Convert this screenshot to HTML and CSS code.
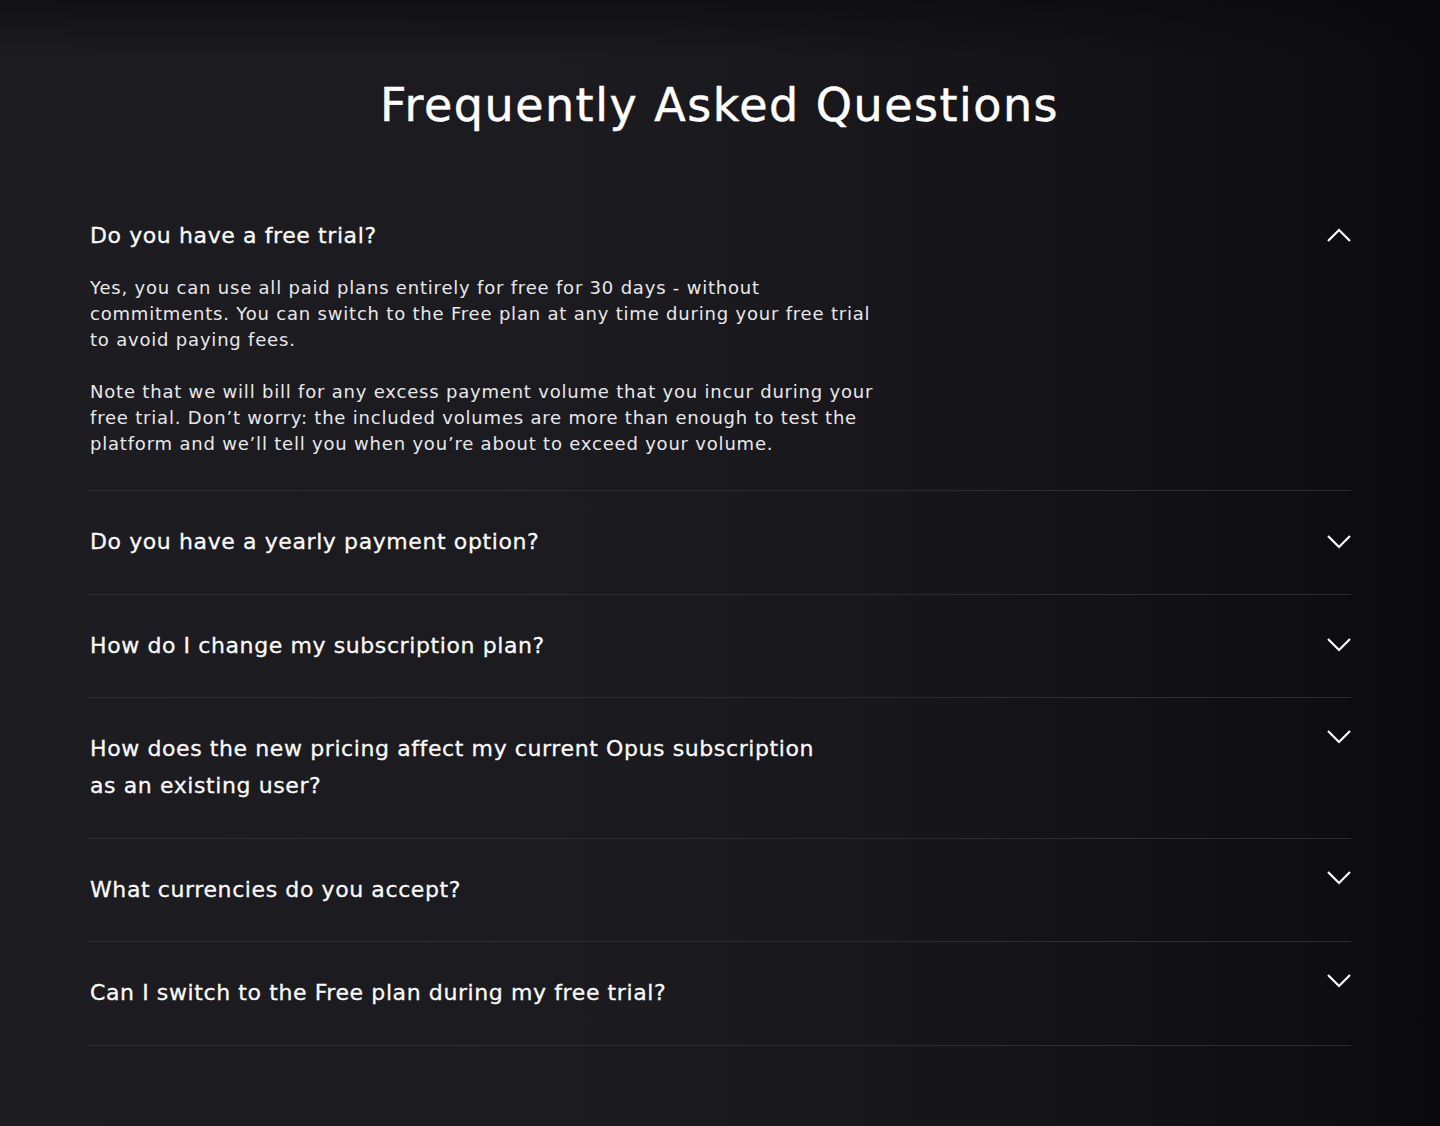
FILE: index.html
```html
<!DOCTYPE html>
<html lang="en">
<head>
<meta charset="utf-8">
<title>FAQ</title>
<link rel="stylesheet" href="styles.css">
</head>
<body>
<main class="page">
  <section class="faq">
    <h1 class="faq-title">Frequently Asked Questions</h1>
    <div class="faq-list">
      <div class="faq-item open">
        <div class="faq-head">
          <h2 class="faq-q">Do you have a free trial?</h2>
          <svg class="chev" width="24" height="14" viewBox="0 0 24 14"><path d="M1 13 L12 2 L23 13" fill="none" stroke="#fff" stroke-width="2.2"/></svg>
        </div>
        <div class="faq-a">
          <p>Yes, you can use all paid plans entirely for free for 30 days - without commitments. You can switch to the Free plan at any time during your free trial to avoid paying fees.</p>
          <p>Note that we will bill for any excess payment volume that you incur during your free trial. Don’t worry: the included volumes are more than enough to test the platform and we’ll tell you when you’re about to exceed your volume.</p>
        </div>
      </div>
      <div class="faq-item">
        <div class="faq-head center">
          <h2 class="faq-q">Do you have a yearly payment option?</h2>
          <svg class="chev" width="24" height="14" viewBox="0 0 24 14"><path d="M1 1 L12 12 L23 1" fill="none" stroke="#fff" stroke-width="2.2"/></svg>
        </div>
      </div>
      <div class="faq-item">
        <div class="faq-head center">
          <h2 class="faq-q">How do I change my subscription plan?</h2>
          <svg class="chev" width="24" height="14" viewBox="0 0 24 14"><path d="M1 1 L12 12 L23 1" fill="none" stroke="#fff" stroke-width="2.2"/></svg>
        </div>
      </div>
      <div class="faq-item">
        <div class="faq-head">
          <h2 class="faq-q wrap">How does the new pricing affect my current Opus subscription as an existing user?</h2>
          <svg class="chev" width="24" height="14" viewBox="0 0 24 14"><path d="M1 1 L12 12 L23 1" fill="none" stroke="#fff" stroke-width="2.2"/></svg>
        </div>
      </div>
      <div class="faq-item">
        <div class="faq-head">
          <h2 class="faq-q">What currencies do you accept?</h2>
          <svg class="chev" width="24" height="14" viewBox="0 0 24 14"><path d="M1 1 L12 12 L23 1" fill="none" stroke="#fff" stroke-width="2.2"/></svg>
        </div>
      </div>
      <div class="faq-item">
        <div class="faq-head">
          <h2 class="faq-q">Can I switch to the Free plan during my free trial?</h2>
          <svg class="chev" width="24" height="14" viewBox="0 0 24 14"><path d="M1 1 L12 12 L23 1" fill="none" stroke="#fff" stroke-width="2.2"/></svg>
        </div>
      </div>
    </div>
  </section>
</main>
</body>
</html>
```

FILE: styles.css
```css
* { box-sizing: border-box; }
html, body { margin: 0; padding: 0; }
body {
  background: #0b0a0d;
  color: #fff;
  font-family: "DejaVu Sans", "Liberation Sans", sans-serif;
  min-height: 1126px;
}
.page {
  min-height: 1126px;
  background:
    linear-gradient(180deg, rgba(8,7,10,0.55) 0px, rgba(8,7,10,0) 60px),
    linear-gradient(90deg, #1d1c21 0%, #1b1a1f 45%, #141318 75%, #0e0d11 92%, #0a090c 100%);
  padding: 77px 89px 80px 88px;
}
.faq-title {
  margin: 0 0 52px;
  text-align: center;
  font-size: 46px;
  line-height: 56px;
  font-weight: normal;
  letter-spacing: 1.5px;
  -webkit-text-stroke: 0.5px #fff;
  color: #fff;
}
.faq-list { display: flex; flex-direction: column; }
.faq-item {
  border-bottom: 1px solid #2d2c32;
  padding: 32px 0 33.5px 2px;
}
.faq-item.open { padding-bottom: 33px; }
.faq-head {
  display: flex;
  justify-content: space-between;
  align-items: flex-start;
}
.faq-head.center { align-items: center; }
.faq-q {
  margin: 0;
  font-size: 22px;
  line-height: 37px;
  font-weight: normal;
  letter-spacing: 0.6px;
  -webkit-text-stroke: 0.3px #fafafa;
  color: #fafafa;
}
.faq-q.wrap { max-width: 740px; }
.chev { flex: none; margin-top: 0; }
.faq-head.center .chev { margin-top: 0; }
.open .chev { margin-top: 11px; }
.faq-a {
  padding-top: 21px;
  max-width: 795px;
  font-family: "DejaVu Sans", "Liberation Sans", sans-serif;
  font-size: 18px;
  line-height: 26px;
  letter-spacing: 0.8px;
  color: #e8e8ea;
}
.faq-a p { margin: 0 0 26px; }
.faq-a p:last-child { margin-bottom: 0; }
```
